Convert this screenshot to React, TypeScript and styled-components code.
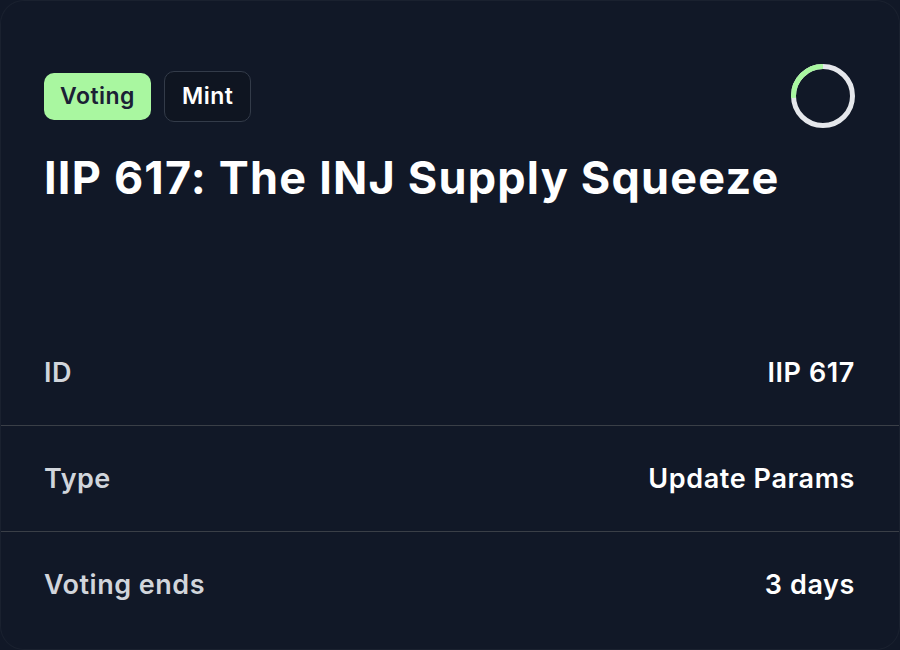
import React from "react";
import styled, { createGlobalStyle } from "styled-components";

const GlobalStyle = createGlobalStyle`
  html, body {
    margin: 0;
    padding: 0;
    background: #111827;
  }
  body {
    font-family: Inter, "Noto Sans", sans-serif;
  }
`;

const Card = styled.div`
  box-sizing: border-box;
  height: 650px;
  display: flex;
  flex-direction: column;
  background: #111827;
  border: 1px solid rgba(255, 255, 255, 0.04);
  border-radius: 24px;
  overflow: hidden;
`;

const Header = styled.div`
  padding: 63px 44px 0 43px;
`;

const TopRow = styled.div`
  display: flex;
  align-items: center;
  justify-content: space-between;
`;

const Tags = styled.div`
  display: flex;
  align-items: center;
  gap: 13px;
`;

const Tag = styled.span<{ $variant: "status" | "outline" }>`
  box-sizing: border-box;
  display: inline-flex;
  align-items: center;
  padding: 0 ${(p) => (p.$variant === "status" ? "16px" : "17px")};
  height: ${(p) => (p.$variant === "status" ? "47px" : "51px")};
  border-radius: 10px;
  font-size: 23px;
  font-weight: 600;
  letter-spacing: 0.5px;
  background: ${(p) => (p.$variant === "status" ? "#a9f7a0" : "#0f1521")};
  color: ${(p) => (p.$variant === "status" ? "#1b2035" : "#ffffff")};
  border: ${(p) => (p.$variant === "status" ? "none" : "1px solid #333b49")};
`;

const Title = styled.h1`
  margin: 23px 0 0 0;
  font-size: 45px;
  line-height: 54px;
  font-weight: 700;
  color: #ffffff;
  letter-spacing: 1.2px;
`;

const Rows = styled.div`
  margin-top: auto;
  padding-bottom: 12px;
`;

const Row = styled.div`
  display: flex;
  align-items: center;
  justify-content: space-between;
  height: 105px;
  padding: 0 44px 0 43px;
  & + & {
    border-top: 1px solid #3a3f47;
  }
`;

const Label = styled.span`
  font-size: 27px;
  font-weight: 600;
  letter-spacing: 0.5px;
  color: #d1d5db;
`;

const Value = styled.span`
  font-size: 27px;
  font-weight: 600;
  letter-spacing: 0.6px;
  color: #ffffff;
`;

const Progress = ({ value }: { value: number }) => {
  const r = 29.5;
  const c = 2 * Math.PI * r;
  return (
    <svg width="64" height="64" viewBox="0 0 64 64">
      <circle cx="32" cy="32" r={r} fill="none" stroke="#e5e7eb" strokeWidth="5" />
      <circle
        cx="32"
        cy="32"
        r={r}
        fill="none"
        stroke="#a9f7a0"
        strokeWidth="5"
        strokeDasharray={`${c * value} ${c}`}
        transform="rotate(-90 32 32) scale(1 -1) translate(0 -64)"
      />
    </svg>
  );
};

const details = [
  { label: "ID", value: "IIP 617" },
  { label: "Type", value: "Update Params" },
  { label: "Voting ends", value: "3 days" },
];

export default function App() {
  return (
    <>
      <GlobalStyle />
      <Card>
        <Header>
          <TopRow>
            <Tags>
              <Tag $variant="status">Voting</Tag>
              <Tag $variant="outline">Mint</Tag>
            </Tags>
            <Progress value={0.26} />
          </TopRow>
          <Title>IIP 617: The INJ Supply Squeeze</Title>
        </Header>
        <Rows>
          {details.map((d) => (
            <Row key={d.label}>
              <Label>{d.label}</Label>
              <Value>{d.value}</Value>
            </Row>
          ))}
        </Rows>
      </Card>
    </>
  );
}
